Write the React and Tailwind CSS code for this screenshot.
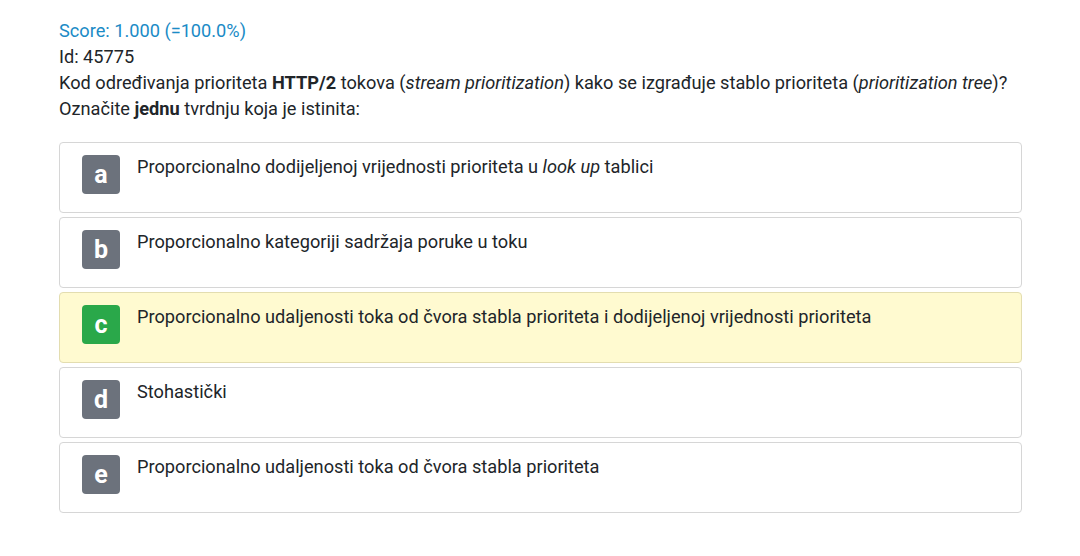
export default function App() {
  const options = [
    { key: 'a', text: <>Proporcionalno dodijeljenoj vrijednosti prioriteta u <em>look up</em> tablici</> },
    { key: 'b', text: <>Proporcionalno kategoriji sadržaja poruke u toku</> },
    { key: 'c', text: <>Proporcionalno udaljenosti toka od čvora stabla prioriteta i dodijeljenoj vrijednosti prioriteta</>, correct: true },
    { key: 'd', text: <>Stohastički</> },
    { key: 'e', text: <>Proporcionalno udaljenosti toka od čvora stabla prioriteta</> },
  ]

  return (
    <div
      className="min-h-[556px] bg-white pl-[59px] pr-[58px] pt-[18px] text-[18.2px] leading-[26px] text-[#212529]"
      style={{ fontFamily: 'Roboto, "Noto Sans", sans-serif' }}
    >
      {/* zaglavlje pitanja */}
      <div className="text-[#1b8bc6]">Score: 1.000 (=100.0%)</div>
      <div>Id: 45775</div>
      <div>
        Kod određivanja prioriteta <strong>HTTP/2</strong> tokova (<em>stream prioritization</em>) kako se
        izgrađuje stablo prioriteta (<em>prioritization tree</em>)?
      </div>
      <div>
        Označite <strong>jednu</strong> tvrdnju koja je istinita:
      </div>

      {/* ponuđeni odgovori */}
      <div className="mt-[20px] flex flex-col gap-[4px]">
        {options.map((o) => (
          <div
            key={o.key}
            className={`flex h-[71px] items-start rounded-[4px] border pl-[22px] pt-[12px] ${
              o.correct ? 'border-[#e3ddb0] bg-[#fffad0]' : 'border-[#d6d6d6] bg-white'
            }`}
          >
            <div
              className={`flex h-[39px] w-[38px] shrink-0 items-center justify-center rounded-[4px] text-[25px] font-bold text-white ${
                o.correct ? 'bg-[#2aa84a]' : 'bg-[#6c727c]'
              }`}
            >
              {o.key}
            </div>
            <div className="ml-[17px] -mt-[1px]">{o.text}</div>
          </div>
        ))}
      </div>
    </div>
  )
}
